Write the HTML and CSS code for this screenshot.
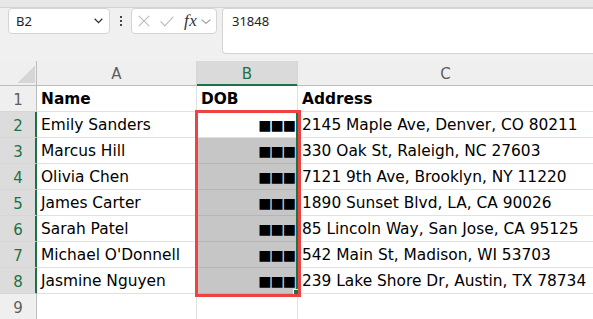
FILE: index.html
```html
<!DOCTYPE html>
<html>
<head>
<meta charset="utf-8">
<link rel="stylesheet" href="styles.css">
</head>
<body>
<div class="topstrip"></div>
<div class="toolbar">
  <div class="namebox">
    <span class="ref">B2</span>
    <svg class="chev" width="9" height="6" viewBox="0 0 9 6"><path d="M0.7 0.8 L4.5 4.6 L8.3 0.8" fill="none" stroke="#333" stroke-width="1.3"/></svg>
  </div>
  <div class="vdots"><i></i><i></i><i></i></div>
  <div class="fxbox">
    <svg class="ico-x" width="12" height="12" viewBox="0 0 12 12"><path d="M0.8 0.8 L11.2 11.2 M11.2 0.8 L0.8 11.2" stroke="#bdbdbd" stroke-width="1.2" fill="none"/></svg>
    <svg class="ico-ok" width="14" height="11" viewBox="0 0 14 11"><path d="M0.6 5.4 L4.8 9.8 L13.4 0.6" stroke="#bdbdbd" stroke-width="1.2" fill="none"/></svg>
    <span class="fx">fx</span>
    <svg class="chev-s" width="10" height="5" viewBox="0 0 10 5"><path d="M0.6 0.6 L5 4.4 L9.4 0.6" fill="none" stroke="#9a9a9a" stroke-width="1.1"/></svg>
  </div>
  <div class="formula">31848</div>
</div>
<div class="sheet">
  <div class="grid">
    <div class="corner"></div>
    <div class="colhdr">A</div>
    <div class="colhdr on">B</div>
    <div class="colhdr last">C</div>

    <div class="rowhdr">1</div>
    <div class="c b">Name</div>
    <div class="c b">DOB</div>
    <div class="c b last">Address</div>

    <div class="rowhdr on">2</div>
    <div class="c">Emily Sanders</div>
    <div class="c sq">■■■</div>
    <div class="c last">2145 Maple Ave, Denver, CO 80211</div>

    <div class="rowhdr on">3</div>
    <div class="c">Marcus Hill</div>
    <div class="c sq sel">■■■</div>
    <div class="c last">330 Oak St, Raleigh, NC 27603</div>

    <div class="rowhdr on">4</div>
    <div class="c">Olivia Chen</div>
    <div class="c sq sel">■■■</div>
    <div class="c last">7121 9th Ave, Brooklyn, NY 11220</div>

    <div class="rowhdr on">5</div>
    <div class="c">James Carter</div>
    <div class="c sq sel">■■■</div>
    <div class="c last">1890 Sunset Blvd, LA, CA 90026</div>

    <div class="rowhdr on">6</div>
    <div class="c">Sarah Patel</div>
    <div class="c sq sel">■■■</div>
    <div class="c last">85 Lincoln Way, San Jose, CA 95125</div>

    <div class="rowhdr on">7</div>
    <div class="c">Michael O'Donnell</div>
    <div class="c sq sel">■■■</div>
    <div class="c last">542 Main St, Madison, WI 53703</div>

    <div class="rowhdr on">8</div>
    <div class="c">Jasmine Nguyen</div>
    <div class="c sq sel">■■■</div>
    <div class="c last">239 Lake Shore Dr, Austin, TX 78734</div>

    <div class="rowhdr">9</div>
    <div class="c"></div>
    <div class="c"></div>
    <div class="c last"></div>
  </div>
  <div class="selbox"></div>
  <div class="handle"></div>
  <div class="mark"></div>
</div>
</body>
</html>
```
FILE: styles.css
```css
* { box-sizing: border-box; margin: 0; padding: 0; }
html, body { width: 593px; height: 319px; overflow: hidden; }
body { background: #f0f0f0; font-family: "DejaVu Sans", sans-serif; }

.topstrip { height: 8px; background: #e7e7e7; border-bottom: 1px solid #d3d3d3; }

.toolbar { display: flex; align-items: flex-start; height: 53px; padding-left: 8px; }

.namebox {
  width: 102px; height: 26px; background: #fff;
  border: 1px solid #d4d4d4; border-radius: 4px;
  display: flex; align-items: center; justify-content: space-between;
  padding: 0 6px 0 7px;
  font: 13px "Noto Sans", sans-serif; color: #222;
}
.namebox .chev { display: block; }

.vdots { width: 21px; height: 26px; display: flex; flex-direction: column; align-items: center; justify-content: center; gap: 2px; }
.vdots i { display: block; width: 2px; height: 2px; background: #444; }

.fxbox {
  width: 86px; height: 26px; background: #fff;
  border: 1px solid #d4d4d4; border-radius: 4px;
  display: flex; align-items: center; padding-left: 6px;
}
.ico-x { display: block; }
.ico-ok { display: block; margin-left: 10px; }
.fx {
  margin-left: 10px; font: italic 17px "Liberation Serif", serif; color: #333;
  letter-spacing: 0.5px; line-height: 20px;
}
.chev-s { display: block; margin-left: 4px; margin-top: 1px; }

.formula {
  margin-left: 5px; flex: 1; height: 46px; background: #fff;
  border: 1px solid #d4d4d4; border-right: none; border-radius: 4px 0 0 4px;
  padding: 3px 0 0 9px; line-height: 18px;
  font: 13px "Noto Sans", sans-serif; color: #222;
}

.sheet { position: relative; background: #fff; height: 258px; }

.grid {
  display: grid;
  grid-template-columns: 37px 160px 101px 295px;
  grid-template-rows: 25px repeat(9, 26px);
}

.corner {
  background: linear-gradient(135deg, transparent 50%, #d6d6d6 50%) no-repeat right 1px bottom 2px / 17px 17px, #efefef;
  border-right: 1px solid #bdbdbd; border-bottom: 1px solid #bdbdbd;
}
.colhdr {
  background: #efefef; border-right: 1px solid #d6d6d6; border-bottom: 1px solid #bdbdbd;
  text-align: center; color: #5e5e5e; font-size: 15px; line-height: 24px; padding-top: 1px;
}
.colhdr.on { background: #dadada; color: #1e7145; border-bottom-color: #1e7145; box-shadow: inset 0 -1px 0 #1e7145; }
.colhdr.last { border-right: none; }

.rowhdr {
  background: #efefef; border-right: 1px solid #bdbdbd; border-bottom: 1px solid #d6d6d6;
  text-align: center; color: #5e5e5e; font-size: 15px; line-height: 24px; padding-top: 2px;
}
.rowhdr.on { background: #dcdcdc; color: #1e7145; border-right-color: #1e7145; box-shadow: inset -1px 0 0 #1e7145; }

.c {
  border-right: 1px solid #e1e1e1; border-bottom: 1px solid #e1e1e1;
  padding: 2px 4px 0; white-space: nowrap; font-size: 15.4px; line-height: 23px; color: #000;
}
.c.last { border-right: none; }
.c.b { font-weight: bold; }
.c.sel { background: #c6c6c6; border-bottom-color: #b5b5b5; }
.c.sq { text-align: right; padding-right: 2px; font-size: 14px; letter-spacing: -1px; }

.selbox { position: absolute; left: 195px; top: 50px; width: 103px; height: 185px; border: 2px solid #1e7145; }
.handle { position: absolute; left: 293px; top: 228px; width: 6px; height: 6px; background: #1e7145; border: 1px solid #fff; }
.mark { position: absolute; left: 195px; top: 49px; width: 106px; height: 187px; border: 3px solid #ee4343; }
```
